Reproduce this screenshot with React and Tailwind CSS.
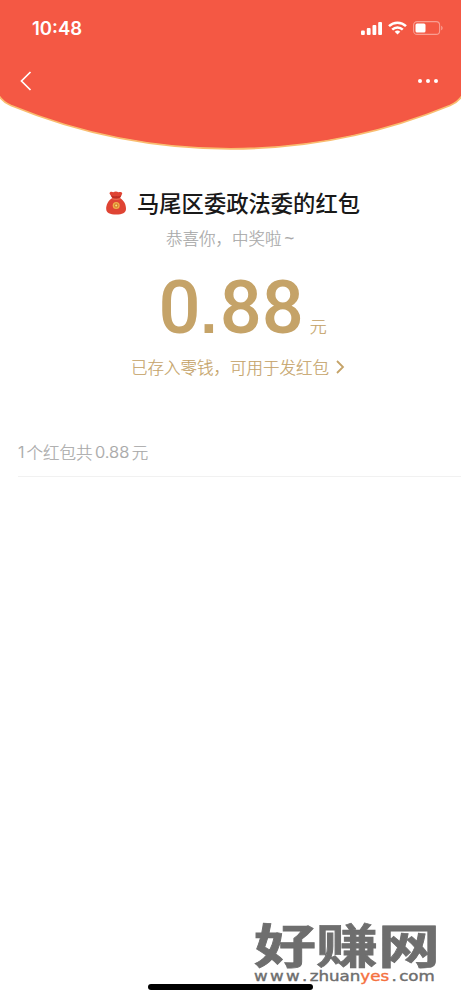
function Signal() {
  return (
    <svg width="21" height="13" viewBox="0 0 21 13" fill="#fff">
      <rect x="0" y="8.500" width="3.800" height="4.500" rx="1" />
      <rect x="5.800" y="6" width="3.800" height="7" rx="1" />
      <rect x="11.500" y="3" width="3.800" height="10" rx="1" />
      <rect x="17.200" y="0" width="3.800" height="13" rx="1" />
    </svg>
  )
}

function Wifi() {
  return (
    <svg width="19" height="14" viewBox="0 0 19 14" fill="none" stroke="#fff" strokeWidth="2.500">
      <path d="M1 5.200a12.200 12.200 0 0 1 17 0" />
      <path d="M4.200 8.600a7.600 7.600 0 0 1 10.600 0" />
      <path d="M9.500 13.600 6.700 10.800a4.100 4.100 0 0 1 5.600 0z" fill="#fff" stroke="none" />
    </svg>
  )
}

function Battery() {
  return (
    <svg width="30" height="14" viewBox="0 0 30 14" fill="none">
      <rect x="0.600" y="0.600" width="26" height="12.800" rx="3.500" stroke="#fff" strokeOpacity="0.420" strokeWidth="1.100" />
      <rect x="2.500" y="2.500" width="10" height="9" rx="1.500" fill="#fff" />
      <path d="M28.300 4.700v4.600c1.600-.6 1.600-4 0-4.600z" fill="#fff" fillOpacity="0.500" />
    </svg>
  )
}

function MoneyBag() {
  return (
    <svg width="22" height="24" viewBox="0 0 22 24">
      <path d="M4.500 2.500C4.500.5 7 .4 8.200 1.300c1.800-1.200 3.900-.9 5.300 0 1.500-.8 4-.5 3.700 1.500L15 7c4 2.300 6.200 7 6 11-.2 4-3.600 5.500-9.800 5.500S1.300 22 1.200 18C1 14 3.500 9 7.300 7z" fill="#df4434" />
      <path d="M7 6.500c2.600 1.200 5.500 1.200 8.200 0l1.200-2.200c-1.800 1-3.500 1.100-5 .7-1.700.6-3.900.3-5.500-.7z" fill="#bd3025" />
      <path d="M7 7.700c2.600.9 5.500.9 8.100 0" stroke="#ec7154" strokeWidth="1" fill="none" />
      <circle cx="11.200" cy="14.500" r="3.500" fill="#efb14a" />
      <circle cx="11.200" cy="14.500" r="2.200" fill="#d9802d" />
      <circle cx="11.200" cy="14.500" r="1" fill="#f8e08a" />
    </svg>
  )
}

function Header() {
  return (
    <header className="relative h-[150px]">
      {/* Curved backdrop with gold rim */}
      <svg className="absolute inset-0" width="461" height="152" viewBox="0 0 461 152">
        <path
          d="M-3 -3H464V92Q461 101 450 106A578 578 0 0 1 11 106Q0 101 -3 92Z"
          fill="#f45844"
          stroke="#f9bd70"
          strokeWidth="1.800"
          transform="translate(0 -0.500)"
        />
      </svg>

      <div className="relative">
        <div className="flex h-14 items-center justify-between pr-[18px] pl-8">
          <span className="pt-0.5 font-['Inter'] text-[18.500px] font-semibold text-white">10:48</span>
          <div className="flex items-center gap-[6px]">
            <Signal />
            <Wifi />
            <Battery />
          </div>
        </div>

        <div className="flex h-[50px] items-center justify-between pr-[23px] pl-5">
          <svg width="12" height="20" viewBox="0 0 12 20" fill="none" stroke="#fff" strokeWidth="1.700">
            <path d="M10.500 1 1.500 10l9 9" />
          </svg>
          <div className="flex gap-1">
            <span className="size-1 rounded-full bg-white" />
            <span className="size-1 rounded-full bg-white" />
            <span className="size-1 rounded-full bg-white" />
          </div>
        </div>
      </div>
    </header>
  )
}

export default function App() {
  return (
    <div className="relative flex h-[1000px] w-[461px] flex-col overflow-hidden bg-white font-['Noto_Sans_CJK_SC',sans-serif]">
      <Header />

      <main className="flex flex-col">
        <div className="mt-[37px] flex h-8 items-center pl-[105px]">
          <MoneyBag />
          <h1 className="-mt-0.5 ml-[10px] text-[22.300px] leading-8 font-medium whitespace-nowrap text-[#191919]">马尾区委政法委的红包</h1>
        </div>
        <p className="mt-[7px] flex pl-[166px] text-[16.500px] leading-6 font-light whitespace-nowrap text-[#a8a8a8] [-webkit-text-stroke:0.200px]">
          恭喜你，中奖啦<span className="ml-[3px] font-['Liberation_Sans']">~</span>
        </p>

        <div className="mt-[18px] flex h-20 items-baseline pl-[158.500px] text-[#c5a368]">
          <span className="font-['Roboto'] text-[74px] leading-[80px] font-medium">
            0<span className="mr-[2.500px] font-['Liberation_Sans'] text-[60px] font-bold">.</span>88
          </span>
          <span className="ml-[6px] text-[17px] leading-6 font-light [-webkit-text-stroke:0.200px]">元</span>
        </div>

        <div className="mt-[7px] flex h-6 items-center pl-[131px] text-[#c5a368]">
          <span className="text-[16.500px] leading-6 font-light whitespace-nowrap [-webkit-text-stroke:0.200px]">已存入零钱，可用于发红包</span>
          <svg className="ml-[7px]" width="9" height="14" viewBox="0 0 9 14" fill="none" stroke="currentColor" strokeWidth="1.800">
            <path d="m1 1 6 6-6 6" />
          </svg>
        </div>

        <div className="mt-[61px] ml-[18px] h-[37px] border-b border-[#f1f1f1] text-[#a8a8a8]">
          <p className="flex text-[16.500px] leading-6 font-light whitespace-nowrap [-webkit-text-stroke:0.200px]">
            <span className="mr-[2px] font-['Inter']">1</span>
            <span>个红包共</span>
            <span className="mx-[2.500px] font-['Inter']">0.88</span>
            <span>元</span>
          </p>
        </div>
      </main>

      {/* Site watermark */}
      <div className="absolute top-[919px] left-[254px] w-[190px] text-[#6e6e6e]">
        <div className="h-[49px] origin-top scale-y-[0.750] text-[62px] leading-[62px] font-bold whitespace-nowrap [-webkit-text-stroke:1px_#6e6e6e]">
          好赚网
        </div>
        <div className="flex origin-left scale-x-[1.190] font-['DejaVu_Sans'] text-[14px] leading-4 whitespace-nowrap [-webkit-text-stroke:0.400px]">
          <span className="tracking-[2px]">www</span>
          <span className="mr-[2px]">.</span>
          <span>zhuan</span>
          <span className="text-[#f5713f]">yes</span>
          <span className="mx-[2px]">.</span>
          <span>com</span>
        </div>
      </div>

      {/* Home indicator */}
      <div className="absolute top-[984px] left-[148px] h-[6px] w-[165px] rounded-full bg-black" />
    </div>
  )
}
